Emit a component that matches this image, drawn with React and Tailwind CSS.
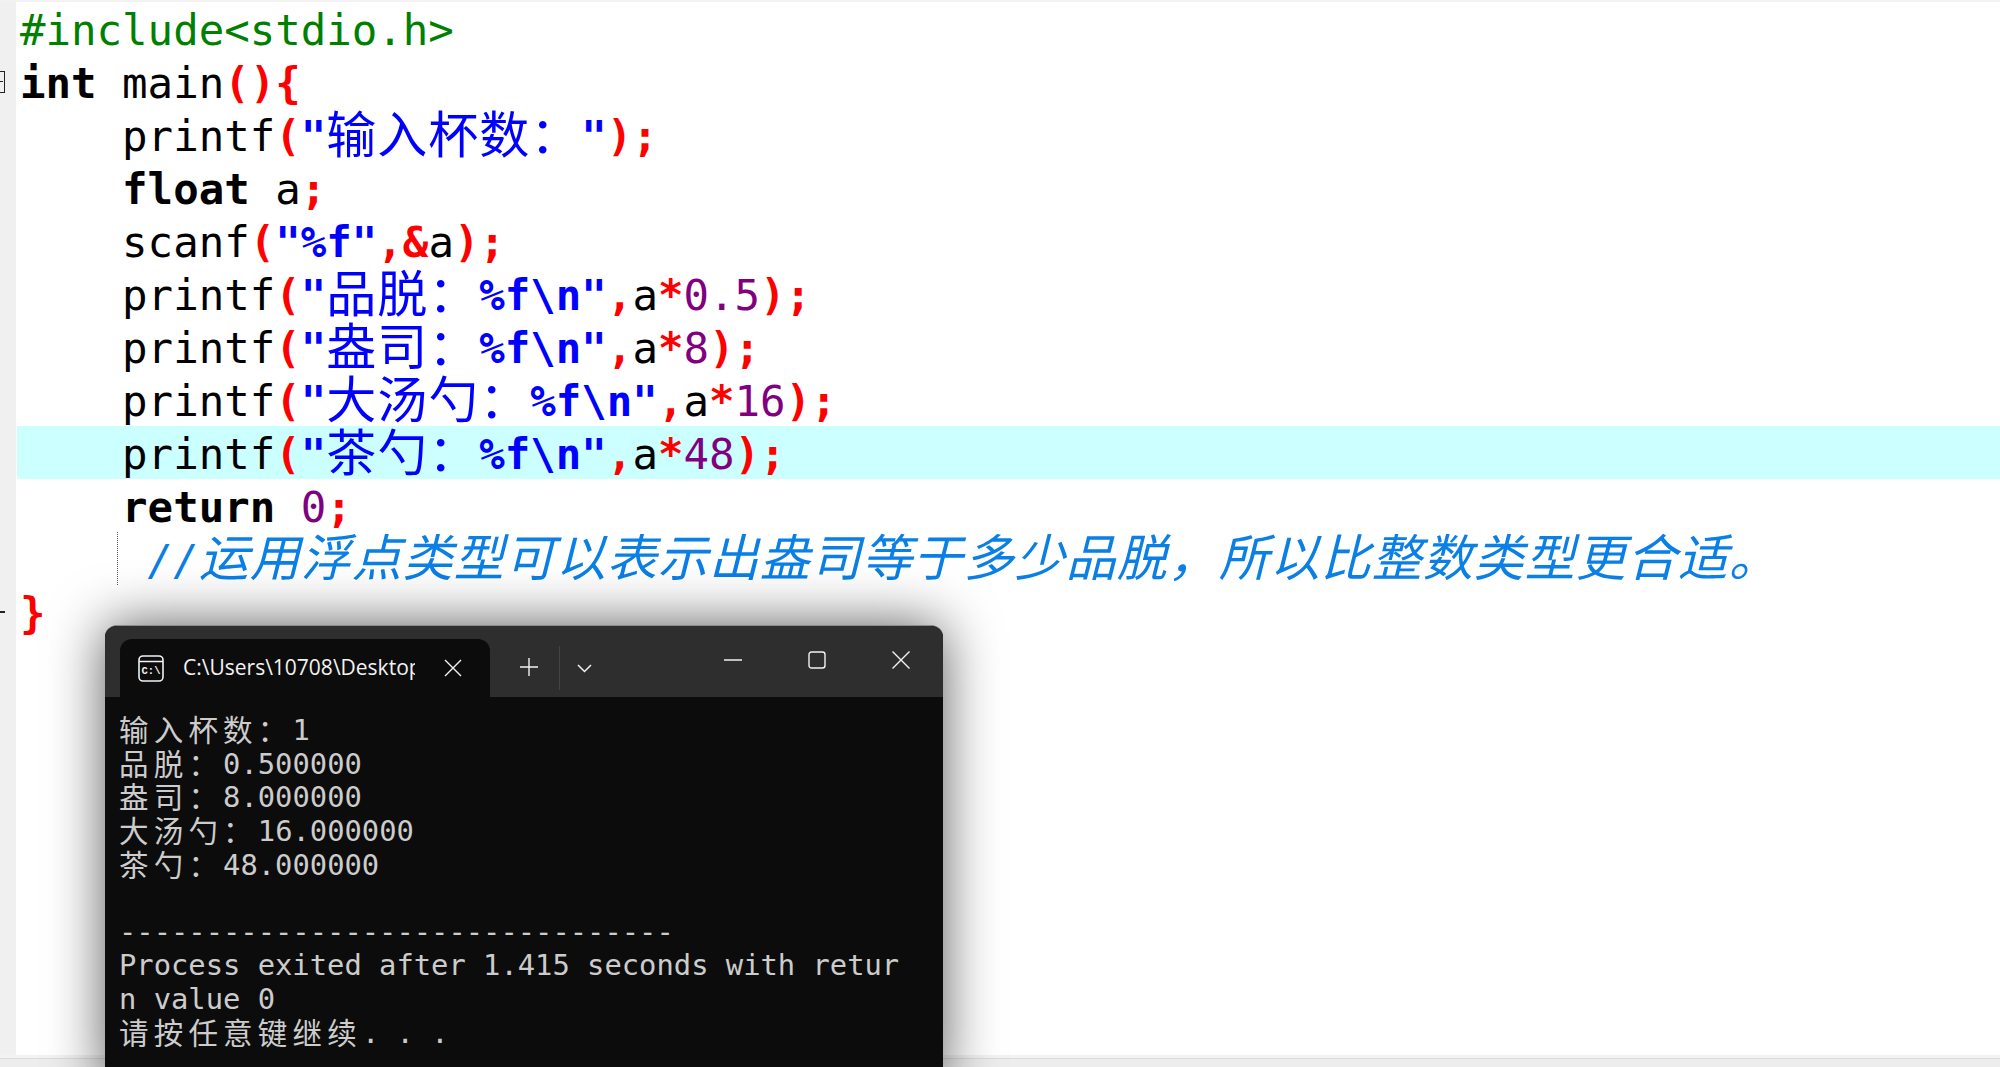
import React from 'react';

const mono = '[font-family:"DejaVu_Sans_Mono","Noto_Sans_CJK_SC",monospace]';

// token colours, one letter per style so the lines below stay readable
const styles = {
  n: 'text-black',
  k: 'text-black font-bold',
  g: 'text-[#008000]',
  p: 'text-[#ff0000] font-bold',
  s: 'text-[#0000ff] font-bold',
  z: 'text-[#0000ff] text-[50px] leading-[0] tracking-[1px] align-[-2px] font-normal [font-family:"Noto_Sans_CJK_SC",sans-serif]',
  d: 'text-[#800080]',
  c: 'text-[#0a7fe6] italic',
  y: 'text-[#0a7fe6] italic text-[50px] leading-[0] tracking-[1px] align-[-1px] [font-family:"Noto_Sans_CJK_SC",sans-serif]',
};

const codeLines = [
  { tokens: [['g', '#include<stdio.h>']] },
  { fold: 'open', tokens: [['k', 'int'], ['n', ' main'], ['p', '(){']] },
  { tokens: [['n', '    printf'], ['p', '('], ['s', '"'], ['z', '输入杯数：'], ['s', '"'], ['p', ');']] },
  { tokens: [['n', '    '], ['k', 'float'], ['n', ' a'], ['p', ';']] },
  { tokens: [['n', '    scanf'], ['p', '('], ['s', '"%f"'], ['p', ',&'], ['n', 'a'], ['p', ');']] },
  { tokens: [['n', '    printf'], ['p', '('], ['s', '"'], ['z', '品脱：'], ['s', '%f\\n"'], ['p', ','], ['n', 'a'], ['p', '*'], ['d', '0.5'], ['p', ');']] },
  { tokens: [['n', '    printf'], ['p', '('], ['s', '"'], ['z', '盎司：'], ['s', '%f\\n"'], ['p', ','], ['n', 'a'], ['p', '*'], ['d', '8'], ['p', ');']] },
  { tokens: [['n', '    printf'], ['p', '('], ['s', '"'], ['z', '大汤勺：'], ['s', '%f\\n"'], ['p', ','], ['n', 'a'], ['p', '*'], ['d', '16'], ['p', ');']] },
  { active: true, tokens: [['n', '    printf'], ['p', '('], ['s', '"'], ['z', '茶勺：'], ['s', '%f\\n"'], ['p', ','], ['n', 'a'], ['p', '*'], ['d', '48'], ['p', ');']] },
  { tokens: [['n', '    '], ['k', 'return'], ['n', ' '], ['d', '0'], ['p', ';']] },
  { guide: true, tokens: [['n', '     '], ['c', '//'], ['y', '运用浮点类型可以表示出盎司等于多少品脱，所以比整数类型更合适。']] },
  { fold: 'end', tokens: [['p', '}']] },
];

// console output: [cjk part, latin part]
const consoleLines = [
  ['输入杯数：', '1'],
  ['品脱：', '0.500000'],
  ['盎司：', '8.000000'],
  ['大汤勺：', '16.000000'],
  ['茶勺：', '48.000000'],
  ['', ' '],
  ['', '--------------------------------'],
  ['', 'Process exited after 1.415 seconds with retur'],
  ['', 'n value 0'],
  ['请按任意键继续', '. . .'],
];

const Line = ({ className, d }) => (
  <svg className={className} viewBox="0 0 18 18" fill="none" stroke="#f2f2f2" strokeWidth="1.4">
    <path d={d} />
  </svg>
);

const CodeRow = ({ line }) => (
  <div className="flex h-[53px] shrink-0">
    <div className="w-4 shrink-0 bg-[#f0f0f0] flex items-center">
      {line.fold === 'open' && (
        <div className="w-[5px] h-[22px] border border-l-0 border-[#222] flex items-center">
          <div className="w-[3px] h-px bg-[#222]" />
        </div>
      )}
      {line.fold === 'end' && <div className="w-[5px] h-[2px] bg-[#222]" />}
    </div>
    <div className={`relative flex-1 ml-px pl-[3px] ${line.active ? 'bg-[#ccffff]' : 'bg-white'}`}>
      {line.guide && (
        <div className="absolute left-[100px] top-0 bottom-0 border-l border-dotted border-[#555]" />
      )}
      <pre className={`${mono} text-[42.4px] leading-[53px] h-[53px] pt-[2px]`}>
        {line.tokens.map(([style, text], i) => (
          <span key={i} className={styles[style]}>{text}</span>
        ))}
      </pre>
    </div>
  </div>
);

const TabIcon = () => (
  <svg className="w-[26px] h-[27px] shrink-0" viewBox="0 0 26 27" fill="none" stroke="#f2f2f2" strokeWidth="1.6">
    <rect x="1" y="1" width="24" height="25" rx="4" />
    <path d="M1 6.5h24" />
    <text x="13" y="19" textAnchor="middle" fontSize="10.5" fontWeight="700" fill="#f2f2f2" stroke="none" fontFamily="Liberation Mono, monospace">C:\</text>
  </svg>
);

const Terminal = () => (
  <div className="absolute left-[105px] top-[625px] bottom-[-20px] w-[838px] rounded-t-xl bg-[#0c0c0c] border-t border-[#8c8c8c] shadow-[0_0_55px_rgba(0,0,0,0.65)] overflow-hidden">
    <div className="flex items-start h-[71px] bg-[#2e2e2e] pl-[15px]">
      <div className="flex items-center mt-[13px] w-[370px] h-[58px] rounded-t-xl bg-[#0c0c0c] pl-[18px]">
        <TabIcon />
        <div className="ml-[19px] w-[232px] overflow-hidden whitespace-nowrap text-[21px] text-[#f2f2f2] [font-family:'Open_Sans',sans-serif]">
          C:\Users\10708\Desktop
        </div>
        <Line className="ml-[29px] w-[18px] h-[18px] shrink-0" d="M1 1l16 16M17 1L1 17" />
      </div>
      <Line className="ml-[30px] mt-[32px] w-[18px] h-[18px] shrink-0" d="M9 0v18M0 9h18" />
      <div className="ml-[21px] mt-[20px] w-px h-[44px] bg-[#444]" />
      <svg className="ml-[17px] mt-[38px] w-[15px] h-[9px] shrink-0" viewBox="0 0 15 9" fill="none" stroke="#f2f2f2" strokeWidth="1.5">
        <path d="M1 1l6.5 6.5L14 1" />
      </svg>
      <div className="ml-auto flex items-start">
        <Line className="mt-[25px] w-[18px] h-[18px]" d="M0 9h18" />
        <svg className="ml-[66px] mt-[25px] w-[18px] h-[18px]" viewBox="0 0 18 18" fill="none" stroke="#f2f2f2" strokeWidth="1.4">
          <rect x="1" y="1" width="16" height="16" rx="2.5" />
        </svg>
        <Line className="ml-[66px] mr-[33px] mt-[25px] w-[18px] h-[18px]" d="M0.5 0.5l17 17M17.5 0.5l-17 17" />
      </div>
    </div>
    <div className={`${mono} pt-[17px] pl-[14px] text-[28.8px] leading-[33.65px] text-[#cccccc]`}>
      {consoleLines.map(([cjk, latin], i) => (
        <div key={i} className="h-[33.65px] whitespace-pre">
          <span className="text-[29.5px] leading-[0] tracking-[5.2px] align-[-1px] [font-family:'Noto_Sans_CJK_SC',sans-serif]">{cjk}</span>
          {latin}
        </div>
      ))}
    </div>
  </div>
);

export default function App() {
  return (
    <div className="relative w-[2000px] h-[1067px] overflow-hidden bg-white flex flex-col">
      <div className="h-[2px] shrink-0 bg-[#f2f2f2]" />
      {codeLines.map((line, i) => (
        <CodeRow key={i} line={line} />
      ))}
      {/* empty editor below the last line */}
      <div className="flex flex-1">
        <div className="w-4 bg-[#f0f0f0]" />
        <div className="flex-1 bg-white" />
      </div>
      <div className="h-[12px] shrink-0 bg-[#f2f2f2] border-b-[8px] border-[#ededed]">
        <div className="mt-[3px] h-px bg-[#dcdcdc]" />
      </div>
      <Terminal />
    </div>
  );
}
